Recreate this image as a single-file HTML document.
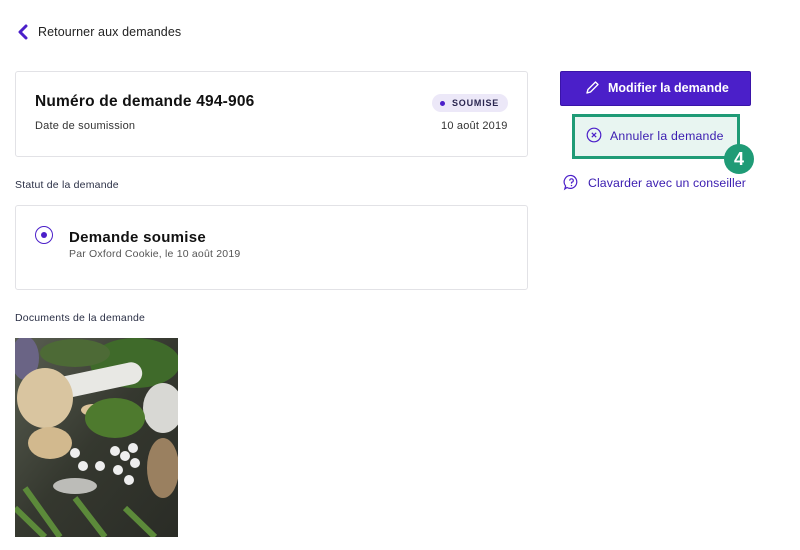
<!DOCTYPE html>
<html><head><meta charset="utf-8"><style>
*{box-sizing:border-box;margin:0;padding:0}
body{width:800px;height:550px;background:#fff;font-family:"Liberation Sans",sans-serif;color:#1c1c2b;position:relative;overflow:hidden}
.abs{position:absolute}
.card{position:absolute;border:1px solid #e2e2e6;border-radius:3px;background:#fff}
</style></head><body>
<svg class="abs" style="left:17px;top:24px" width="12" height="16" viewBox="0 0 12 16"><path d="M9 2 L3 8 L9 14" stroke="#4b1fc9" stroke-width="3" fill="none" stroke-linecap="round" stroke-linejoin="round"/></svg>
<div class="abs" style="left:38px;top:25px;font-size:12.5px;color:#222;letter-spacing:.1px">Retourner aux demandes</div>

<div class="card" style="left:15px;top:71px;width:513px;height:86px"></div>
<div class="abs" style="left:35px;top:93px;font-size:15.5px;font-weight:bold;color:#111;letter-spacing:.2px;-webkit-text-stroke:0">Numéro de demande 494-906</div>
<div class="abs" style="left:35px;top:120px;font-size:11px;color:#333;letter-spacing:.2px">Date de soumission</div>
<div class="abs" style="left:432px;top:94px;width:76px;height:18px;border-radius:9px;background:#ece8f8;font-size:9px;font-weight:bold;letter-spacing:.8px;color:#2a2650;line-height:18px;padding-left:20px">SOUMISE</div>
<div class="abs" style="left:440px;top:101px;width:5px;height:5px;border-radius:50%;background:#4b1fc9"></div>
<div class="abs" style="left:441px;top:120px;font-size:11px;color:#333;letter-spacing:.2px">10 août 2019</div>

<div class="abs" style="left:15px;top:179px;font-size:10.5px;color:#2a2f45;letter-spacing:.2px">Statut de la demande</div>
<div class="card" style="left:15px;top:205px;width:513px;height:85px"></div>
<div class="abs" style="left:35px;top:226px;width:18px;height:18px;border-radius:50%;border:1.5px solid #4b1fc9"></div>
<div class="abs" style="left:41px;top:232px;width:6px;height:6px;border-radius:50%;background:#4b1fc9"></div>
<div class="abs" style="left:69px;top:229px;font-size:15px;font-weight:bold;color:#111;letter-spacing:.3px">Demande soumise</div>
<div class="abs" style="left:69px;top:248px;font-size:10.5px;color:#555;letter-spacing:.2px">Par Oxford Cookie, le 10 août 2019</div>

<div class="abs" style="left:15px;top:312px;font-size:10.5px;color:#2a2f45;letter-spacing:.2px">Documents de la demande</div>
<svg class="abs" style="left:15px;top:338px" width="163" height="199" viewBox="0 0 163 199">
<defs><linearGradient id="g" x1="0" y1="0" x2="1" y2="1"><stop offset="0" stop-color="#5a5f52"/><stop offset=".5" stop-color="#35382f"/><stop offset="1" stop-color="#2a2c26"/></linearGradient></defs>
<rect width="163" height="199" fill="url(#g)"/>
<ellipse cx="120" cy="25" rx="45" ry="25" fill="#3f6a2a"/>
<ellipse cx="60" cy="15" rx="35" ry="14" fill="#4d6a36"/>
<ellipse cx="10" cy="20" rx="14" ry="22" fill="#6a6485"/>
<rect x="38" y="32" width="90" height="22" rx="11" fill="#e8e8e4" transform="rotate(-12 80 43)"/>
<ellipse cx="148" cy="70" rx="20" ry="25" fill="#d8d8d4"/>
<ellipse cx="30" cy="60" rx="28" ry="30" fill="#d9c5a0"/>
<ellipse cx="35" cy="105" rx="22" ry="16" fill="#d2b98e"/>
<ellipse cx="78" cy="72" rx="12" ry="6" fill="#dcc49b"/>
<ellipse cx="100" cy="80" rx="30" ry="20" fill="#4e7a2e"/>
<ellipse cx="148" cy="130" rx="16" ry="30" fill="#9a8060"/>
<g fill="#eeeeee"><circle cx="60" cy="115" r="5"/><circle cx="68" cy="128" r="5"/><circle cx="85" cy="128" r="5"/><circle cx="100" cy="113" r="5"/><circle cx="110" cy="118" r="5"/><circle cx="118" cy="110" r="5"/><circle cx="120" cy="125" r="5"/><circle cx="103" cy="132" r="5"/><circle cx="114" cy="142" r="5"/></g>
<ellipse cx="60" cy="148" rx="22" ry="8" fill="#bcbcb8"/>
<path d="M0 170 L30 199 M10 150 L45 199 M60 160 L90 199 M110 170 L140 199" stroke="#5c8a3a" stroke-width="6"/>
</svg>

<div class="abs" style="left:560px;top:71px;width:191px;height:35px;background:#4b1fc9;border-radius:2px;border:1px solid #3a14a8"></div>
<svg class="abs" style="left:584px;top:80px" width="16" height="16" viewBox="0 0 16 16"><path d="M3 13 L4 9.5 L11.5 2 L14 4.5 L6.5 12 Z M3 13 L6.5 12" stroke="#fff" stroke-width="1.4" fill="none" stroke-linejoin="round"/></svg>
<div class="abs" style="left:608px;top:81px;font-size:12.5px;font-weight:bold;color:#fff">Modifier la demande</div>

<div class="abs" style="left:572px;top:114px;width:168px;height:45px;background:#e8f5f1;border:3px solid #1f9b76"></div>
<svg class="abs" style="left:586px;top:127px" width="16" height="16" viewBox="0 0 16 16"><circle cx="8" cy="8" r="6.8" stroke="#4b1fc9" stroke-width="1.2" fill="none"/><path d="M5.8 5.8 L10.2 10.2 M10.2 5.8 L5.8 10.2" stroke="#4b1fc9" stroke-width="1.2"/></svg>
<div class="abs" style="left:610px;top:129px;font-size:12.3px;color:#3a1cb0;letter-spacing:.2px">Annuler la demande</div>
<div class="abs" style="left:724px;top:144px;width:30px;height:30px;border-radius:50%;background:#1f9b76;color:#fff;font-weight:bold;font-size:18px;text-align:center;line-height:30px">4</div>

<svg class="abs" style="left:563px;top:174px" width="17" height="17" viewBox="0 0 17 17"><path d="M8.5 1.5 A6.5 6.5 0 1 1 4 13.5 L1.8 15 L2.6 12 A6.5 6.5 0 0 1 8.5 1.5 Z" stroke="#4b1fc9" stroke-width="1.2" fill="none"/><path d="M6.7 6.6 A1.8 1.8 0 1 1 8.5 8.4 L8.5 9.6" stroke="#4b1fc9" stroke-width="1.2" fill="none"/><circle cx="8.5" cy="11.6" r=".7" fill="#4b1fc9"/></svg>
<div class="abs" style="left:588px;top:176px;font-size:12.3px;color:#3a1cb0;letter-spacing:.1px">Clavarder avec un conseiller</div>
</body></html>
